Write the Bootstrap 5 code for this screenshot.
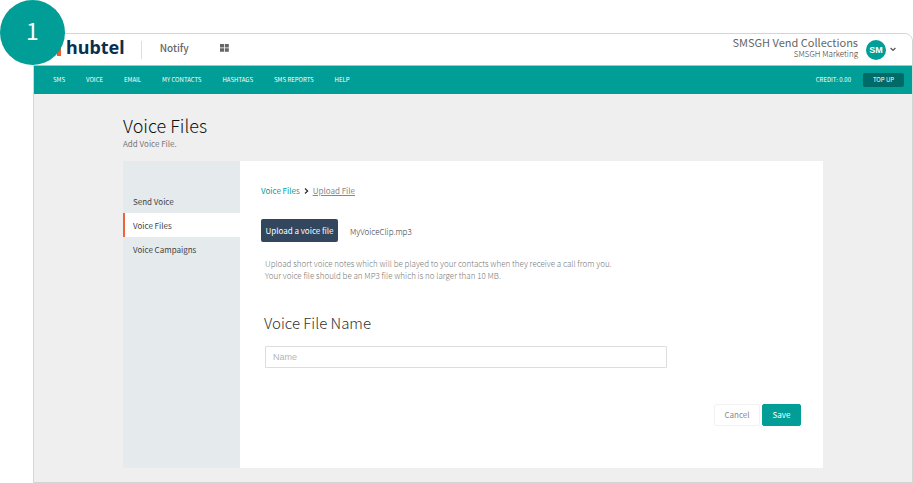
<!DOCTYPE html>
<html lang="en">
<head>
<meta charset="utf-8">
<meta name="viewport" content="width=device-width, initial-scale=1">
<title>Hubtel Notify - Voice Files</title>
<link href="https://cdn.jsdelivr.net/npm/bootstrap@5.3.0/dist/css/bootstrap.min.css" rel="stylesheet">
<style>
:root{--teal:#009e97;--line:#d5d5d5}
body{font-family:"Noto Sans CJK SC","Noto Sans",sans-serif;font-size:8px;line-height:12px;color:#555;background:#fff}
.page{padding:33px 0 0 33px;position:relative}
.frame{border:1px solid var(--line);border-radius:0 8px 0 0;background:#efefef;overflow:hidden;min-height:450px}
.step{position:absolute;left:0;top:0;width:65px;height:65px;background:var(--teal);color:#fff;font-size:23px;line-height:61px}
.topbar{height:32px;background:#fff;border-bottom:1px solid #8fd0cc;padding:0 16px 0 20px}
.wordmark{font-family:"Noto Sans",sans-serif;font-weight:700;font-size:18px;line-height:24px;padding-bottom:6px;color:#0b2f50}
.split{width:1px;height:18px;background:#ddd;margin:0 18px 0 16px}
.product{font-size:10px;line-height:24px;padding-bottom:4px;font-weight:500;color:#666}
.apps{margin-left:31px;margin-bottom:4px}
.topbar svg{display:block}
.org{font-size:11px;line-height:12px;font-weight:400;color:#666}
.suborg{font-size:8px;line-height:12px;font-weight:300;color:#333}
.avatar{width:20px;height:20px;background:var(--teal);color:#fff;font:bold 9px/20px "Liberation Sans",sans-serif}
.mainnav{height:28px;background:var(--teal);color:#fff;padding:0 8px 0 19px;font-size:6px}
.mainnav a{color:#fff;text-decoration:none}
.mainnav ul{gap:21px}
.credit{margin-right:12px}
.topup{width:41px;height:14px;border:0;border-radius:2px;background:#006b66;color:#fff;font-size:6px;line-height:12px;padding:0}
.content{max-width:700px;margin:0 auto;padding:19px 0 14px}
h1{font-size:18px;line-height:24px;font-weight:300;color:#111;margin:0}
.intro{line-height:14px;color:#777;margin:0 0 10px}
.side{width:117px;background:#e5eaed;padding-top:28px}
.side a{display:block;height:24px;line-height:25px;padding-left:8px;border-left:2px solid transparent;color:#444;text-decoration:none}
.side a.active{background:#fff;border-left-color:#f0623c}
.panel{background:#fff;min-height:307px;padding:24px 22px 40px 21px}
.crumbs a{color:var(--teal);text-decoration:none}
.crumbs a.here{color:#888;text-decoration:underline}
.pick-row{margin-top:22px;gap:12px}
.pick{height:23px;width:77px;border:0;border-radius:2px;background:#32465e;color:#fff;font-size:8px;line-height:20px;padding:0}
.filename{font-weight:300;color:#333;padding-top:2px}
.help{font-weight:300;color:#777;margin:16px 0 0 4px}
h2{font-size:15px;line-height:20px;font-weight:300;color:#333;margin:31px 0 13px 3px}
.name-box{width:402px;height:22px;border:1px solid #ddd;border-radius:1px;padding:0 7px;margin-left:4px;font:9px/20px "Liberation Sans",sans-serif;color:#555}
.name-box::placeholder{color:#b5b5b5}
.actions{margin-top:36px;gap:2px}
.actions button{height:22px;border-radius:2px;font-size:8px;line-height:18px;border:1px solid #f2f2f2;background:#fff;color:#888;width:46px}
.actions .save{width:39px;background:var(--teal);border-color:var(--teal);color:#fff}
</style>
<script src="https://cdn.jsdelivr.net/npm/bootstrap@5.3.0/dist/js/bootstrap.bundle.min.js"></script>
</head>
<body>
<div class="page">
  <div class="frame">
    <header class="topbar d-flex align-items-center">
      <a href="#" class="d-flex align-items-center text-decoration-none" aria-label="hubtel">
        <svg width="12" height="18" viewBox="0 0 12 18" aria-hidden="true"><path d="M3 3h4v12H3z" fill="#f15a29"/></svg>
        <span class="wordmark">hubtel</span>
      </a>
      <span class="split"></span>
      <span class="product">Notify</span>
      <button class="btn p-0 border-0 apps" aria-label="Apps"><svg width="9" height="8" viewBox="0 0 9 8" fill="#666"><path d="M0 0h4v3.5H0zM4.8 0h4v3.5h-4zM0 4.3h4v3.5H0zM4.8 4.3h4v3.5h-4z"/></svg></button>
      <div class="text-end ms-auto me-2 pb-1"><div class="org">SMSGH Vend Collections</div><div class="suborg">SMSGH Marketing</div></div>
      <button class="btn p-0 border-0 d-flex align-items-center" aria-label="Account menu"><span class="avatar rounded-circle">SM</span><svg class="ms-1" width="6" height="5" viewBox="0 0 6 5" fill="none" stroke="#555" stroke-width="1.3"><path d="M.6 1 3 3.4 5.4 1"/></svg></button>
    </header>
    <nav class="mainnav d-flex align-items-center">
      <ul class="list-unstyled d-flex m-0">
        <li><a href="#">SMS</a></li><li><a href="#">VOICE</a></li><li><a href="#">EMAIL</a></li><li><a href="#">MY CONTACTS</a></li><li><a href="#">HASHTAGS</a></li><li><a href="#">SMS REPORTS</a></li><li><a href="#">HELP</a></li>
      </ul>
      <span class="credit ms-auto">CREDIT: 0.00</span>
      <button class="topup">TOP UP</button>
    </nav>
    <main class="content">
      <h1>Voice Files</h1>
      <p class="intro">Add Voice File.</p>
      <div class="d-flex">
        <aside class="side flex-shrink-0"><a href="#">Send Voice</a><a href="#" class="active" aria-current="page">Voice Files</a><a href="#">Voice Campaigns</a></aside>
        <form class="panel flex-grow-1">
          <div class="crumbs d-flex align-items-center"><a href="#">Voice Files</a><svg class="mx-1" width="5" height="6" viewBox="0 0 5 6" fill="none" stroke="#333" stroke-width="1.3"><path d="M1 .6 3.6 3 1 5.4"/></svg><a href="#" class="here">Upload File</a></div>
          <div class="pick-row d-flex align-items-center"><button type="button" class="pick">Upload a voice file</button><span class="filename">MyVoiceClip.mp3</span></div>
          <p class="help">Upload short voice notes which will be played to your contacts when they receive a call from you.<br>Your voice file should be an MP3 file which is no larger than 10 MB.</p>
          <h2><label for="fname">Voice File Name</label></h2>
          <input id="fname" class="name-box" type="text" placeholder="Name">
          <div class="actions d-flex justify-content-end"><button type="button">Cancel</button><button type="submit" class="save">Save</button></div>
        </form>
      </div>
    </main>
  </div>
  <div class="step rounded-circle text-center">1</div>
</div>
</body>
</html>
